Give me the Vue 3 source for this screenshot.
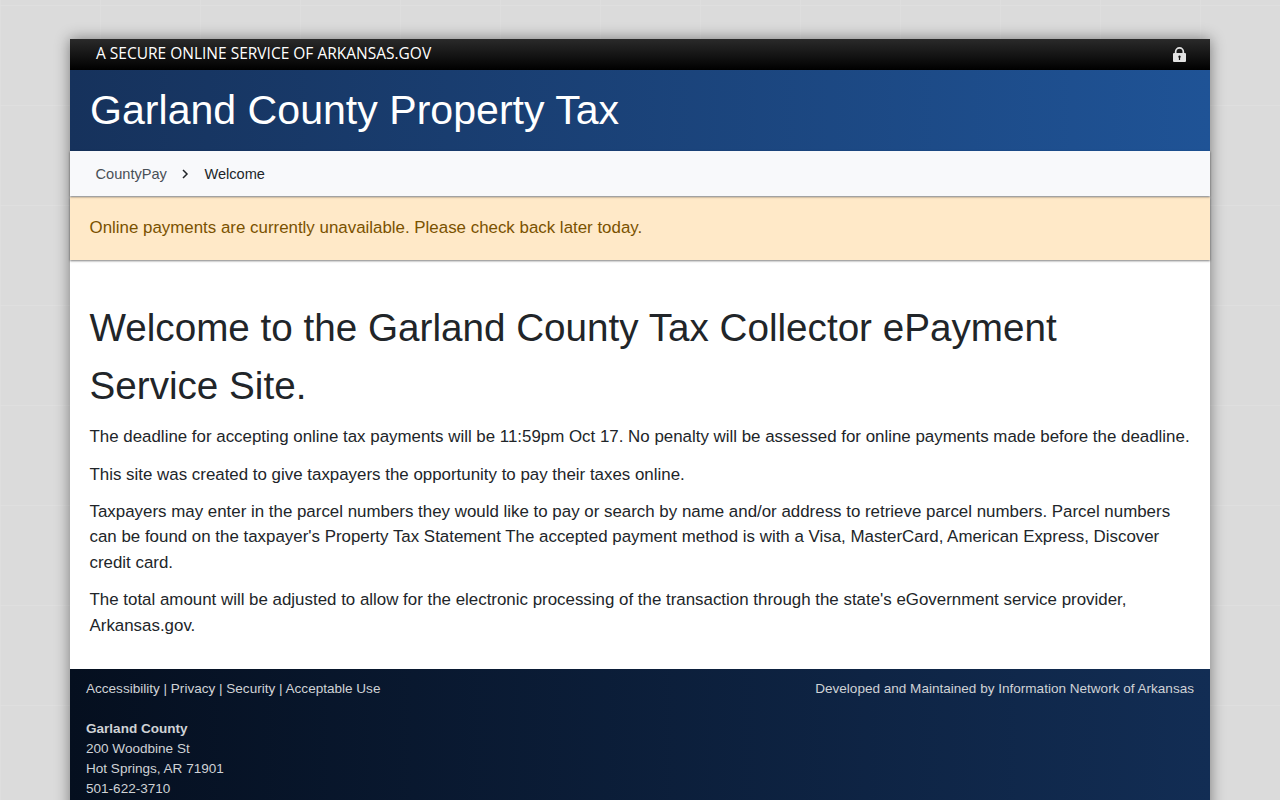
<script setup>
const policyLinks = ['Accessibility', 'Privacy', 'Security', 'Acceptable Use']
</script>

<template>
  <div class="page">
    <div class="shell">
      <div class="topbar">
        <span class="secure">A SECURE ONLINE SERVICE OF ARKANSAS.GOV</span>
        <svg class="lock" viewBox="0 0 13 15" width="13" height="15" aria-hidden="true">
          <path fill="#e2e2e2" fill-rule="evenodd" d="M1.800 6V4.700a4.700 4.700 0 0 1 9.400 0V6h.8a1 1 0 0 1 1 1v7a1 1 0 0 1-1 1H1a1 1 0 0 1-1-1V7a1 1 0 0 1 1-1h.8zM3.500 6h6V4.700a3 3 0 0 0-6 0V6zM6.500 8.500a1.200 1.200 0 0 0-.6 2.240V13h1.200v-2.260a1.200 1.200 0 0 0-.6-2.240z"/>
        </svg>
      </div>
      <header class="banner">
        <div class="title">Garland County Property Tax</div>
      </header>
      <nav class="crumbs">
        <a class="crumb-link">CountyPay</a>
        <svg class="chev" viewBox="0 0 8 10" width="8" height="10" aria-hidden="true">
          <path d="M2 1l4 4-4 4" fill="none" stroke="#212529" stroke-width="1.500"/>
        </svg>
        <span class="crumb-current">Welcome</span>
      </nav>
      <div class="alert">Online payments are currently unavailable. Please check back later today.</div>
      <main class="content">
        <h1>Welcome to the Garland County Tax Collector ePayment Service Site.</h1>
        <p class="lead">The deadline for accepting online tax payments will be 11:59pm Oct 17. No penalty will be assessed for online payments made before the deadline.</p>
        <p class="second">This site was created to give taxpayers the opportunity to pay their taxes online.</p>
        <p>Taxpayers may enter in the parcel numbers they would like to pay or search by name and/or address to retrieve parcel numbers. Parcel numbers can be found on the taxpayer's Property Tax Statement The accepted payment method is with a Visa, MasterCard, American Express, Discover credit card.</p>
        <p>The total amount will be adjusted to allow for the electronic processing of the transaction through the state's eGovernment service provider, Arkansas.gov.</p>
      </main>
      <footer class="footer">
        <div class="foot-row">
          <div>
            <template v-for="(link, i) in policyLinks" :key="link">
              <a>{{ link }}</a><span v-if="i < policyLinks.length - 1"> | </span>
            </template>
          </div>
          <div>Developed and Maintained by Information Network of Arkansas</div>
        </div>
        <address class="addr">
          <strong>Garland County</strong><br />
          200 Woodbine St<br />
          Hot Springs, AR 71901<br />
          501-622-3710
        </address>
      </footer>
    </div>
  </div>
</template>

<style>
html, body { margin: 0; overflow: hidden; }
</style>

<style scoped>
.page {
  height: 800px;
  overflow: hidden;
  padding-top: 39px;
  box-sizing: border-box;
  background-color: #dbdbdb;
  background-image:
    linear-gradient(#dfdfdf 1px, transparent 1px),
    linear-gradient(90deg, #dedede 1px, transparent 1px);
  background-size: 100px 100px;
  background-position: 0 5px;
  font-family: "Liberation Sans", Arial, sans-serif;
}
.shell {
  width: 1140px;
  margin: 0 auto;
  background: #fff;
  box-shadow: 0 0 14px rgba(0, 0, 0, 0.45);
}
.topbar {
  height: 31px;
  box-sizing: border-box;
  display: flex;
  align-items: center;
  justify-content: space-between;
  padding: 0 24px 0 26px;
  background: linear-gradient(#2a2a2a, #000);
}
.secure {
  font-family: "Open Sans", sans-serif;
  font-size: 15.500px;
  line-height: 20px;
  color: #fff;
  position: relative;
  top: -2px;
}
.banner {
  height: 81px;
  box-sizing: border-box;
  padding: 0 20px 2px;
  display: flex;
  align-items: center;
  background: linear-gradient(90deg, #16325c, #1f5396);
}
.title {
  font-size: 41.100px;
  line-height: 48px;
  color: #fff;
}
.crumbs {
  height: 45px;
  box-sizing: border-box;
  padding: 0 26px 0 25.500px;
  display: flex;
  align-items: center;
  background: #f8f9fb;
  font-size: 14.600px;
  box-shadow: 0 1px 2px rgba(0, 0, 0, 0.5);
  position: relative;
  z-index: 1;
}
.crumb-link { color: #495057; }
.chev { margin: 0 15px 0 14.500px; }
.crumb-current { color: #212529; }
.alert {
  margin-top: 1px;
  height: 63px;
  box-sizing: border-box;
  padding: 0 19.500px 2px;
  display: flex;
  align-items: center;
  background: #ffe9c8;
  color: #7a5200;
  font-size: 16.900px;
  box-shadow: 0 1px 2px rgba(0, 0, 0, 0.5);
}
.content {
  padding: 38.500px 19.500px 18.250px;
  color: #212529;
  font-size: 16.900px;
  line-height: 25.500px;
}
h1 {
  margin: 0 0 9.250px;
  font-size: 38.650px;
  font-weight: 400;
  line-height: 58px;
}
p { margin: 0 0 12px; }
.lead { margin-bottom: 12.500px; }
.second { margin-bottom: 11.500px; }
.footer {
  padding: 10px 16px 30px;
  background: linear-gradient(90deg, #050f1f, #122d54);
  color: #cfd2d6;
  font-size: 13.550px;
  line-height: 20px;
}
.foot-row {
  display: flex;
  justify-content: space-between;
}
.addr {
  margin-top: 20px;
  font-style: normal;
}
</style>
